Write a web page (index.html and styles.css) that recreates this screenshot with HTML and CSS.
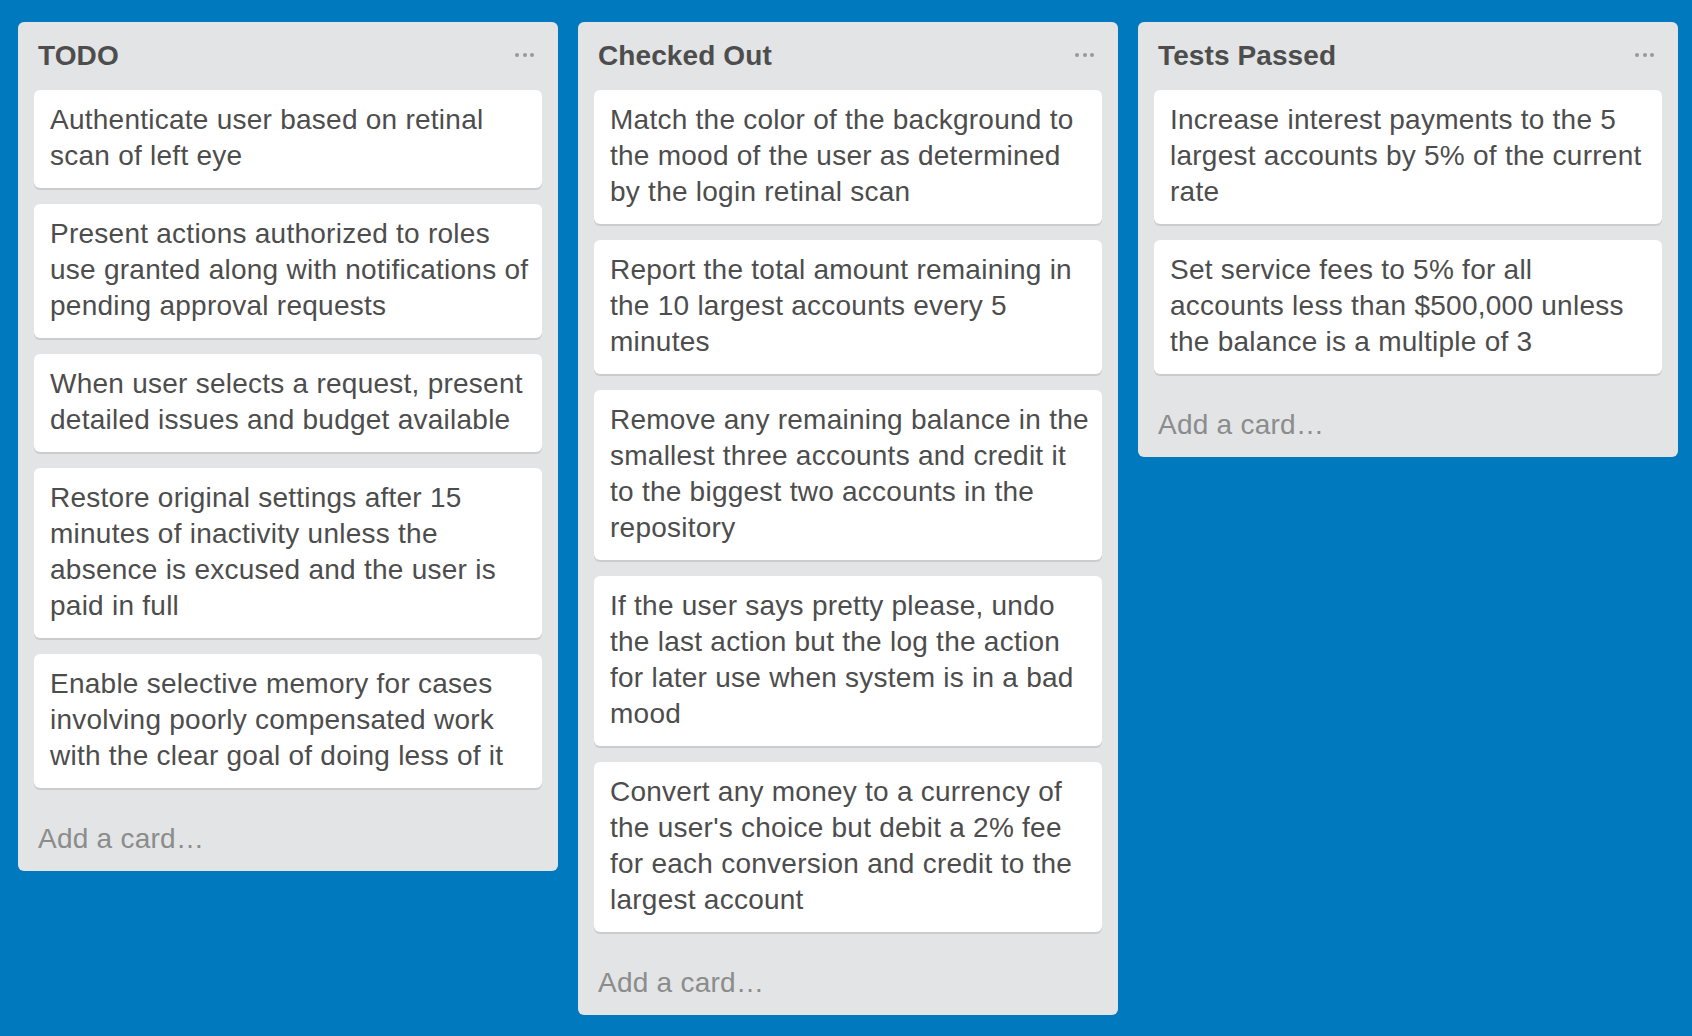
FILE: index.html
```html
<!DOCTYPE html>
<html>
<head>
<meta charset="utf-8">
<title>Board</title>
<link rel="stylesheet" href="styles.css">
</head>
<body>
<div class="board">
  <div class="list">
    <div class="list-header">
      <h2 class="list-title">TODO</h2>
      <span class="list-menu"><i></i><i></i><i></i></span>
    </div>
    <div class="cards">
      <div class="card">Authenticate user based on retinal scan of left eye</div>
      <div class="card">Present actions authorized to roles use granted along with notifications of pending approval requests</div>
      <div class="card">When user selects a request, present detailed issues and budget available</div>
      <div class="card">Restore original settings after 15 minutes of inactivity unless the absence is excused and the user is paid in full</div>
      <div class="card">Enable selective memory for cases involving poorly compensated work with the clear goal of doing less of it</div>
    </div>
    <div class="add-card">Add a card…</div>
  </div>
  <div class="list">
    <div class="list-header">
      <h2 class="list-title">Checked Out</h2>
      <span class="list-menu"><i></i><i></i><i></i></span>
    </div>
    <div class="cards">
      <div class="card">Match the color of the background to the mood of the user as determined by the login retinal scan</div>
      <div class="card">Report the total amount remaining in the 10 largest accounts every 5 minutes</div>
      <div class="card">Remove any remaining balance in the smallest three accounts and credit it to the biggest two accounts in the repository</div>
      <div class="card">If the user says pretty please, undo the last action but the log the action for later use when system is in a bad mood</div>
      <div class="card">Convert any money to a currency of the user's choice but debit a 2% fee for each conversion and credit to the largest account</div>
    </div>
    <div class="add-card">Add a card…</div>
  </div>
  <div class="list">
    <div class="list-header">
      <h2 class="list-title">Tests Passed</h2>
      <span class="list-menu"><i></i><i></i><i></i></span>
    </div>
    <div class="cards">
      <div class="card">Increase interest payments to the 5 largest accounts by 5% of the current rate</div>
      <div class="card">Set service fees to 5% for all accounts less than $500,000 unless the balance is a multiple of 3</div>
    </div>
    <div class="add-card">Add a card…</div>
  </div>
</div>
</body>
</html>
```

FILE: styles.css
```css
html, body {
  margin: 0;
  padding: 0;
  height: 100%;
}
body {
  background: #0079bf;
  font-family: "Liberation Sans", Arial, Helvetica, sans-serif;
  color: #4d4d4d;
}
.board {
  display: flex;
  align-items: flex-start;
  gap: 20px;
  padding: 22px 0 0 18px;
}
.list {
  width: 540px;
  flex: 0 0 540px;
  background: #e2e4e6;
  border-radius: 6px;
  display: flex;
  flex-direction: column;
}
.list-header {
  display: flex;
  align-items: center;
  justify-content: space-between;
  padding: 16px 24px 16px 20px;
}
.list-title {
  margin: 0;
  font-size: 28px;
  line-height: 36px;
  font-weight: bold;
  letter-spacing: 0.1px;
  color: #4d4d4d;
}
.list-menu {
  display: flex;
  gap: 3.5px;
  align-items: center;
  margin-top: -3px;
}
.list-menu i {
  display: block;
  width: 4px;
  height: 4px;
  border-radius: 50%;
  background: #999;
}
.cards {
  padding: 0 16px;
  display: flex;
  flex-direction: column;
  gap: 16px;
}
.card {
  background: #fff;
  border-radius: 6px;
  box-shadow: 0 2px 0 #ccc;
  padding: 12px 10px 14px 16px;
  font-size: 28px;
  line-height: 36px;
  letter-spacing: 0.25px;
  color: #4d4d4d;
}
.add-card {
  margin-top: 16px;
  padding: 17px 20px 14px;
  font-size: 28px;
  line-height: 36px;
  letter-spacing: 0.25px;
  color: #8c8c8c;
}
```
